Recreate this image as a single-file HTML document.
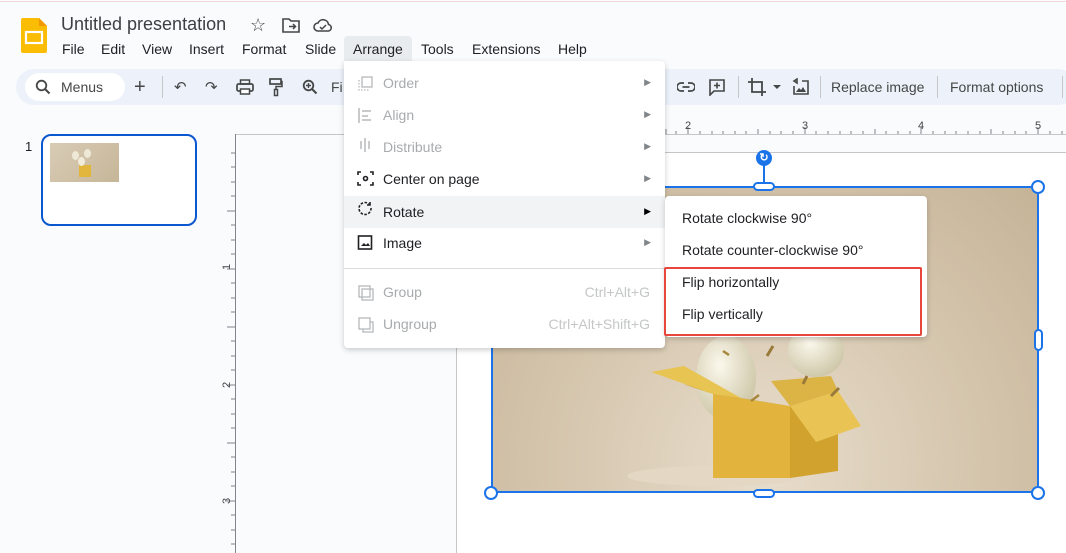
<!DOCTYPE html>
<html><head><meta charset="utf-8"><style>
*{box-sizing:border-box;margin:0;padding:0}
body{width:1066px;height:553px;overflow:hidden;background:#f9fbfd;font-family:"Liberation Sans",Arial,sans-serif;position:relative;color:#202124}
.a{position:absolute}
.topline{left:0;top:1px;width:1066px;height:1px;background:#f6d7d9}
.title{left:61px;top:14px;font-size:18px;color:#3c4043}
.menu span{position:absolute;top:41px;font-size:14px;color:#202124}
.tb{left:16px;top:69px;width:1060px;height:36px;border-radius:18px;background:#edf2fa}
.search{left:25px;top:73px;width:100px;height:28px;border-radius:14px;background:#fff}
.sep{width:1px;height:22px;background:#c7c7c7;top:76px}
.ico{color:#444746;font-size:15px}
.mi{position:absolute;left:0;width:321px;height:32px;font-size:14px}
.mi .t{position:absolute;left:39px;top:8px}
.mi .r{position:absolute;right:14px;top:10px;font-size:9px;color:#80868b}
.mi .k{position:absolute;right:15px;top:8px;color:#c4c7c5}
.dis{color:#a8abad}
.si{position:absolute;left:17px;top:14px;font-size:14px;color:#202124}
.h{position:absolute;width:10px;height:10px;border:2px solid #1a73e8;background:#fff;border-radius:50%}
</style></head><body>
<div class="a topline"></div>
<svg class="a" style="left:21px;top:18px" width="26" height="35" viewBox="0 0 26 35"><path d="M2 0h16l8 8v25a2 2 0 0 1-2 2H2a2 2 0 0 1-2-2V2a2 2 0 0 1 2-2z" fill="#fbbc04"/><path d="M18 0l8 8h-8z" fill="#f29900"/><rect x="5" y="14" width="16" height="11" fill="none" stroke="#fff" stroke-width="2.2"/></svg>
<div class="a title">Untitled presentation</div>
<div class="a ico" style="left:250px;top:15px;font-size:18px">☆</div>
<svg class="a" style="left:282px;top:18px" width="18" height="15" viewBox="0 0 18 15"><path d="M1 1h6l2 2h8v11H1z" fill="none" stroke="#444746" stroke-width="1.6"/><path d="M7 8.5h6M11 6l2.5 2.5L11 11" fill="none" stroke="#444746" stroke-width="1.5"/></svg>
<svg class="a" style="left:313px;top:18px" width="20" height="14" viewBox="0 0 20 14"><path d="M5 13a4 4 0 0 1 0-8 5.5 5.5 0 0 1 10.5 1.5A3.3 3.3 0 0 1 15.5 13z" fill="none" stroke="#444746" stroke-width="1.6"/><path d="M7 9l2 2 4-4" fill="none" stroke="#444746" stroke-width="1.5"/></svg>
<div class="a" style="left:344px;top:36px;width:68px;height:25px;background:#e9ecef;border-radius:4px 4px 0 0"></div>
<div class="menu"><span style="left:62px">File</span><span style="left:101px">Edit</span><span style="left:142px">View</span><span style="left:189px">Insert</span><span style="left:242px">Format</span><span style="left:305px">Slide</span><span style="left:353px">Arrange</span><span style="left:421px">Tools</span><span style="left:472px">Extensions</span><span style="left:558px">Help</span></div>
<div class="a tb"></div>
<div class="a search"></div>
<svg class="a" style="left:35px;top:79px" width="16" height="16" viewBox="0 0 16 16"><circle cx="6.5" cy="6.5" r="4.8" fill="none" stroke="#444746" stroke-width="1.8"/><path d="M10 10l4.5 4.5" stroke="#444746" stroke-width="2"/></svg>
<div class="a" style="left:61px;top:79px;font-size:14px;color:#444746">Menus</div>
<div class="a ico" style="left:134px;top:76px;font-size:20px">+</div>
<div class="a sep" style="left:162px"></div>
<div class="a ico" style="left:174px;top:78px">↶</div>
<div class="a ico" style="left:205px;top:78px">↷</div>
<svg class="a" style="left:236px;top:79px" width="18" height="16" viewBox="0 0 18 16"><rect x="1" y="5" width="16" height="7" rx="1.5" fill="none" stroke="#444746" stroke-width="1.7"/><rect x="4.5" y="1" width="9" height="4" fill="none" stroke="#444746" stroke-width="1.5"/><rect x="4.5" y="10" width="9" height="5" fill="#fff" stroke="#444746" stroke-width="1.5"/></svg>
<svg class="a" style="left:269px;top:78px" width="14" height="19" viewBox="0 0 14 19"><rect x="1" y="1" width="11" height="5" fill="none" stroke="#444746" stroke-width="1.7"/><path d="M12 3.5h1v5H7v3" fill="none" stroke="#444746" stroke-width="1.5"/><rect x="5.5" y="11.5" width="3" height="6" fill="none" stroke="#444746" stroke-width="1.5"/></svg>
<svg class="a" style="left:302px;top:79px" width="16" height="16" viewBox="0 0 16 16"><circle cx="6.5" cy="6.5" r="4.8" fill="none" stroke="#444746" stroke-width="1.8"/><path d="M10 10l4.5 4.5" stroke="#444746" stroke-width="2"/><path d="M4 6.5h5M6.5 4v5" stroke="#444746" stroke-width="1.4"/></svg>
<div class="a" style="left:331px;top:79px;font-size:14px;color:#444746">Fi</div>
<svg class="a" style="left:677px;top:81px" width="18" height="12" viewBox="0 0 18 12"><path d="M7 2H4a4 4 0 0 0 0 8h3M11 2h3a4 4 0 0 1 0 8h-3M5.5 6h7" fill="none" stroke="#444746" stroke-width="1.7"/></svg>
<svg class="a" style="left:708px;top:78px" width="18" height="18" viewBox="0 0 18 18"><path d="M2 2h14v11H6l-4 4z" fill="none" stroke="#444746" stroke-width="1.6"/><path d="M9 4.5v6M6 7.5h6" stroke="#444746" stroke-width="1.6"/></svg>
<div class="a sep" style="left:738px"></div>
<svg class="a" style="left:747px;top:77px" width="20" height="20" viewBox="0 0 20 20"><path d="M5 1v14h14M1 5h14v14" fill="none" stroke="#444746" stroke-width="1.8"/></svg>
<div class="a" style="left:773px;top:85px;width:0;height:0;border-left:4px solid transparent;border-right:4px solid transparent;border-top:4px solid #444746"></div>
<svg class="a" style="left:792px;top:78px" width="18" height="18" viewBox="0 0 18 18"><path d="M2 8V16h14V3h-6M2 3l3-2v4z" fill="none" stroke="#444746" stroke-width="1.6"/><path d="M4 14l3-4 2 2 2-3 3 5z" fill="#444746"/></svg>
<div class="a sep" style="left:820px"></div>
<div class="a" style="left:831px;top:79px;font-size:14px;color:#444746">Replace image</div>
<div class="a sep" style="left:937px"></div>
<div class="a" style="left:950px;top:79px;font-size:14px;color:#444746">Format options</div>
<div class="a sep" style="left:1062px"></div>
<div class="a" style="left:25px;top:139px;font-size:13px">1</div>
<div class="a" style="left:41px;top:134px;width:156px;height:92px;border:2px solid #0b57d0;border-radius:10px;background:#fff"></div>
<div class="a" style="left:50px;top:143px;width:69px;height:39px;background:linear-gradient(135deg,#d9ccb6,#c6b698)"><div class="a" style="left:29px;top:22px;width:12px;height:12px;background:#e2b53c"></div><div class="a" style="left:22px;top:8px;width:7px;height:9px;border-radius:50%;background:#eee9d6"></div><div class="a" style="left:34px;top:6px;width:7px;height:9px;border-radius:50%;background:#eee9d6"></div><div class="a" style="left:28px;top:14px;width:7px;height:9px;border-radius:50%;background:#f1ecd9"></div></div>
<div class="a" style="left:236px;top:134px;width:830px;height:1px;background:#c4c7c5"></div>
<div class="a" style="left:235px;top:134px;width:1px;height:419px;background:#80868b"></div>
<div class="a" style="left:456px;top:152px;width:1px;height:401px;background:#c4c7c5"></div>
<div class="a" style="left:456px;top:152px;width:610px;height:1px;background:#c4c7c5"></div>
<div class="a" style="left:457px;top:153px;width:609px;height:400px;background:#fff"></div>
<svg class="a" style="left:0;top:0" width="1066" height="553">
<g stroke="#80868b" stroke-width="1">
<path d="M666 129v5M676 131v3M688 127v7M700 131v3M712 131v3M723 131v3M735 131v3M746 131v3M758 129v5M770 131v3M781 131v3M793 131v3M805 127v7M816 131v3M828 131v3M840 131v3M851 131v3M863 131v3M875 129v5M886 131v3M898 131v3M910 131v3M921 127v7M933 131v3M945 131v3M956 131v3M968 131v3M980 131v3M991 129v5M1003 131v3M1015 131v3M1026 131v3M1038 127v7M1050 131v3M1062 131v3"/>
<path d="M231 153h4M231 167h4M231 182h4M231 196h4M227 211h8M231 225h4M231 240h4M231 254h4M227 269h8M231 283h4M231 298h4M231 312h4M227 327h8M231 341h4M231 356h4M231 370h4M227 385h8M231 399h4M231 414h4M231 428h4M227 443h8M231 457h4M231 472h4M231 486h4M227 501h8M231 515h4M231 530h4M231 544h4"/>
</g>
<g font-size="11" fill="#444746" font-family="Liberation Sans"><text x="685" y="129">2</text><text x="802" y="129">3</text><text x="918" y="129">4</text><text x="1035" y="129">5</text>
<text transform="translate(230,270) rotate(-90)">1</text><text transform="translate(230,388) rotate(-90)">2</text><text transform="translate(230,504) rotate(-90)">3</text></g>
</svg>
<!-- image -->
<div class="a" style="left:491px;top:186px;width:548px;height:307px;background:radial-gradient(ellipse at 50% 90%,#e8ddcc 0%,#d8c9b2 45%,#c5b397 100%);overflow:hidden">
<svg width="548" height="307" viewBox="0 0 548 307">
<defs><radialGradient id="bl" cx="40%" cy="35%" r="65%"><stop offset="0" stop-color="#fbf8ec"/><stop offset="1" stop-color="#cfc8aa"/></radialGradient></defs>
<ellipse cx="226" cy="290" rx="90" ry="10" fill="#e4d8c4"/>
<ellipse cx="325" cy="165" rx="28" ry="26" fill="url(#bl)"/>
<ellipse cx="235" cy="192" rx="30" ry="42" fill="url(#bl)"/>
<polygon points="222,208 299,220 299,292 222,292" fill="#e2b43d"/>
<polygon points="299,220 347,205 347,285 299,292" fill="#d2a22e"/>
<polygon points="222,208 192,198 250,212 299,220" fill="#caa036"/>
<polygon points="299,220 347,205 370,240 325,256" fill="#e9c455"/>
<polygon points="222,208 160,186 193,180 250,212" fill="#e8c452"/>
<polygon points="299,220 280,195 340,190 347,205" fill="#dcb445"/>
<path d="M282 160l-6 10M316 190l-4 8M340 210l8-8M248 250" stroke="#9a7a3a" stroke-width="3"/>
<path d="M260 215l8-6M232 165l6 4" stroke="#a8873d" stroke-width="2.5"/>
</svg>
</div>
<div class="a" style="left:491px;top:186px;width:548px;height:307px;border:2px solid #1a73e8"></div>
<div class="a" style="left:763px;top:164px;width:2px;height:22px;background:#1a73e8"></div>
<div class="a" style="left:756px;top:150px;width:16px;height:16px;border-radius:50%;background:#1a73e8;color:#fff;font-size:11px;font-weight:bold;text-align:center;line-height:16px">↻</div>
<div class="a" style="left:753px;top:182px;width:22px;height:9px;border:2px solid #1a73e8;background:#fff;border-radius:5px"></div>
<div class="a" style="left:753px;top:489px;width:22px;height:9px;border:2px solid #1a73e8;background:#fff;border-radius:5px"></div>
<div class="a" style="left:1034px;top:329px;width:9px;height:22px;border:2px solid #1a73e8;background:#fff;border-radius:5px"></div>
<div class="h" style="left:1031px;top:180px;width:14px;height:14px"></div>
<div class="h" style="left:484px;top:486px;width:14px;height:14px"></div>
<div class="h" style="left:1031px;top:486px;width:14px;height:14px"></div>
<div class="a" style="left:344px;top:61px;width:321px;height:287px;background:#fff;border-radius:0 4px 4px 4px;box-shadow:0 2px 6px rgba(0,0,0,.2)">
<div class="mi dis" style="top:6px"><span class="t">Order</span><span class="r">▶</span></div>
<div class="mi dis" style="top:38px"><span class="t">Align</span><span class="r">▶</span></div>
<div class="mi dis" style="top:70px"><span class="t">Distribute</span><span class="r">▶</span></div>
<div class="mi" style="top:102px"><span class="t">Center on page</span><span class="r">▶</span></div>
<div class="mi" style="top:135px;background:#f1f3f4"><span class="t" style="top:8px">Rotate</span><span class="r" style="color:#000">▶</span></div>
<div class="mi" style="top:166px"><span class="t">Image</span><span class="r">▶</span></div>
<div class="a" style="left:0;top:207px;width:321px;height:1px;background:#dadce0"></div>
<div class="mi dis" style="top:215px"><span class="t">Group</span><span class="k">Ctrl+Alt+G</span></div>
<div class="mi dis" style="top:247px"><span class="t">Ungroup</span><span class="k">Ctrl+Alt+Shift+G</span></div>
</div>
<svg class="a" style="left:356px;top:74px" width="20" height="270" viewBox="0 0 20 270">
<g fill="none" stroke="#b5b8bb" stroke-width="1.3"><rect x="6" y="3" width="10" height="10"/><path d="M3 6v10h10" stroke-dasharray="1.5 1.5"/>
<path d="M3 34v15M6 37h9M6 42h6M6 46h9" stroke-width="1.5"/>
<path d="M5 67v8M9 64v14M13 67v8" stroke-width="1.5"/>
<rect x="3" y="212" width="11" height="11"/><rect x="6" y="215" width="11" height="11"/>
<rect x="3" y="244" width="11" height="11"/><path d="M7 255v3h10V248h-3"/></g>
<g fill="none" stroke="#202124" stroke-width="1.6"><path d="M2 101v-3h3M14 98h3v3M17 108v3h-3M5 111H2v-3"/><circle cx="9.5" cy="104.5" r="2"/>
<path d="M15 134a6 6 0 1 1-2-4" stroke-dasharray="2.5 1.5"/><path d="M14 128v3h-3"/>
<rect x="2.5" y="162" width="13" height="13"/></g><path d="M5 172l3-3 2 2 2-2 2 3z" fill="#202124"/>
</svg>
<div class="a" style="left:665px;top:196px;width:262px;height:141px;background:#fff;border-radius:4px;box-shadow:0 2px 6px rgba(0,0,0,.2)">
<div class="si" style="top:14px">Rotate clockwise 90°</div>
<div class="si" style="top:46px">Rotate counter-clockwise 90°</div>
<div class="si" style="top:78px">Flip horizontally</div>
<div class="si" style="top:110px">Flip vertically</div>
</div>
<div class="a" style="left:664px;top:267px;width:258px;height:69px;border:2.5px solid #e8453c;border-radius:2px"></div>
</body></html>
